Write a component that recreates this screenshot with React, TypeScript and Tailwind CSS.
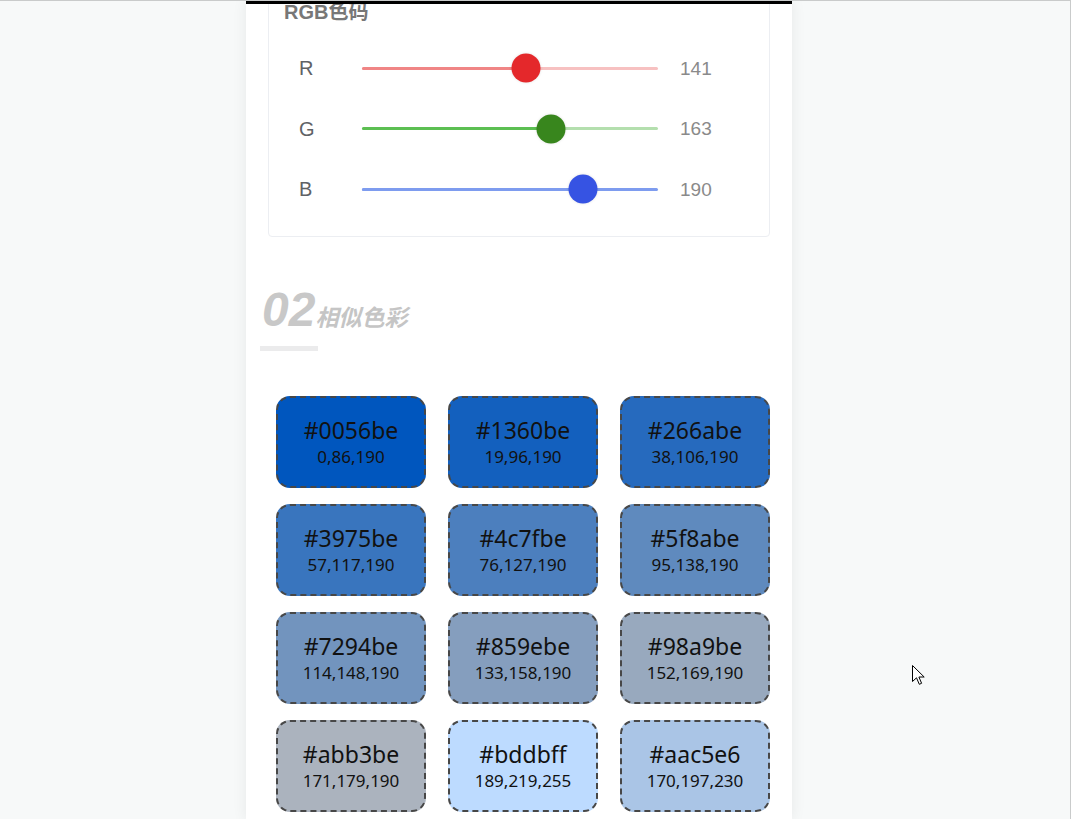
import React from "react";

type Channel = {
    label: string;
    value: number;
    done: string;
    rest: string;
    thumb: string;
};

const channels: Channel[] = [
    { label: "R", value: 141, done: "#f08585", rest: "#f7c1c1", thumb: "#e4282b" },
    { label: "G", value: 163, done: "#5cbf52", rest: "#b4dfae", thumb: "#38861d" },
    { label: "B", value: 190, done: "#7e9cef", rest: "#7e9cef", thumb: "#3653e3" },
];

const swatches = [
    { hex: "#0056be", rgb: "0,86,190" },
    { hex: "#1360be", rgb: "19,96,190" },
    { hex: "#266abe", rgb: "38,106,190" },
    { hex: "#3975be", rgb: "57,117,190" },
    { hex: "#4c7fbe", rgb: "76,127,190" },
    { hex: "#5f8abe", rgb: "95,138,190" },
    { hex: "#7294be", rgb: "114,148,190" },
    { hex: "#859ebe", rgb: "133,158,190" },
    { hex: "#98a9be", rgb: "152,169,190" },
    { hex: "#abb3be", rgb: "171,179,190" },
    { hex: "#bddbff", rgb: "189,219,255" },
    { hex: "#aac5e6", rgb: "170,197,230" },
];

const SliderRow = ({ ch }: { ch: Channel }) => {
    const pct = (ch.value / 255) * 100;
    return (
        <div className="h-[60.5px] flex flex-row items-center">
            <div className="w-[63px] text-[20px] text-[#606266] leading-none">{ch.label}</div>
            <div className="relative w-[296px] h-[3px] rounded-full" style={{ background: ch.rest }}>
                <div className="absolute left-0 top-0 h-[3px] rounded-full" style={{ width: `${pct}%`, background: ch.done }} />
                <div
                    className="absolute top-1/2 w-[29px] h-[29px] -translate-x-1/2 -translate-y-1/2 rounded-full shadow-[0_0_3px_rgba(0,0,0,0.12)]"
                    style={{ left: `${pct}%`, background: ch.thumb }}
                />
            </div>
            <div className="ml-[22px] text-[19px] text-[#8a8a8a] leading-none">{ch.value}</div>
        </div>
    );
};

const Cursor = () => (
    <svg className="absolute left-[912px] top-[664px]" width="14" height="22" viewBox="0 0 14 22">
        <path d="M0.5 0.5 L0.5 16.5 L4.5 12.8 L7.3 19.3 L9.6 18.3 L6.9 12 L12.2 12 Z" fill="#fff" stroke="#000" strokeWidth="1" />
    </svg>
);

const App = () => {
    return (
        <div
            className="relative w-[1071px] h-[819px] overflow-hidden bg-[#f7f9f9] border-t border-r border-[#c9cbcb] flex flex-row"
            style={{ fontFamily: '"Liberation Sans", "Noto Sans CJK SC", sans-serif' }}
        >
            <div className="ml-[246px] -mt-px w-[546px] h-[820px] bg-white shadow-[0_0_14px_rgba(0,0,0,0.07)] flex flex-col">
                <div className="relative z-10 h-[4px] bg-black shrink-0" />
                <div className="-mt-[20px] mx-[22px] rounded-[4px] border border-[#eceef2] pt-[15px] pb-[16px]">
                    <div className="pl-[15px] h-[24px] leading-[24px] text-[20px] font-bold text-[#777]">RGB色码</div>
                    <div className="mt-[14px] pl-[30px] flex flex-col">
                        {channels.map((ch) => (
                            <SliderRow key={ch.label} ch={ch} />
                        ))}
                    </div>
                </div>

                <div className="ml-[16px] mt-[49px] flex flex-row items-baseline italic font-bold text-[#c8c8c8]">
                    <span className="text-[48px] leading-[48px]">02</span>
                    <span className="text-[23px] text-[#c5c5c5]">相似色彩</span>
                </div>
                <div className="ml-[14px] mt-[11px] w-[58px] h-[5px] bg-[#ebebec]" />

                <div className="ml-[30px] mt-[45px] grid grid-cols-[150px_150px_150px] gap-x-[22px] gap-y-[16px]">
                    {swatches.map((s) => (
                        <div
                            key={s.hex}
                            className="h-[92px] rounded-[14px] border-2 border-dashed border-[#474747] flex flex-col items-center justify-center text-[#111]"
                            style={{ background: s.hex, fontFamily: '"Noto Sans", "Open Sans", sans-serif' }}
                        >
                            <div className="text-[23px] leading-[29px]">{s.hex}</div>
                            <div className="text-[17px] leading-[23px]">{s.rgb}</div>
                        </div>
                    ))}
                </div>
            </div>
            <Cursor />
        </div>
    );
};

export default App;
